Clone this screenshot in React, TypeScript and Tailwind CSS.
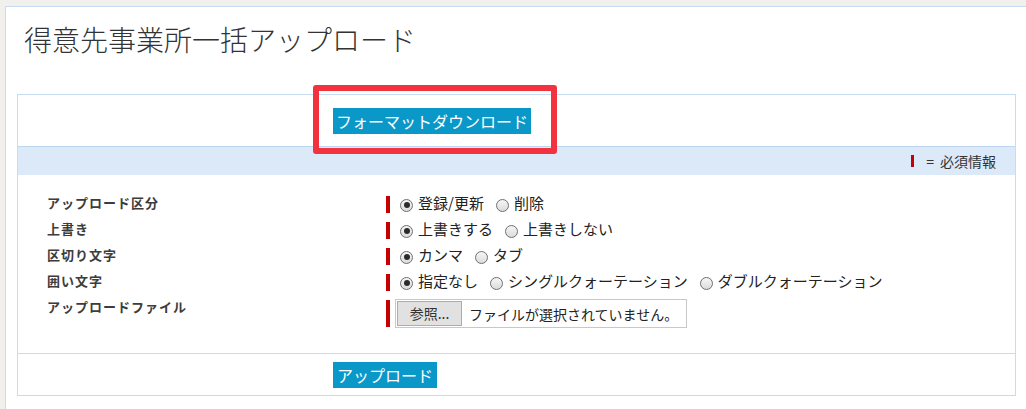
import React from 'react';

type Option = { label: string; checked?: boolean };

const rows: { label: string; options: Option[] }[] = [
  { label: 'アップロード区分', options: [{ label: '登録/更新', checked: true }, { label: '削除' }] },
  { label: '上書き', options: [{ label: '上書きする', checked: true }, { label: '上書きしない' }] },
  { label: '区切り文字', options: [{ label: 'カンマ', checked: true }, { label: 'タブ' }] },
  {
    label: '囲い文字',
    options: [
      { label: '指定なし', checked: true },
      { label: 'シングルクォーテーション' },
      { label: 'ダブルクォーテーション' },
    ],
  },
];

function Radio({ checked }: { checked?: boolean }) {
  return (
    <span className="mt-[4px] flex h-[13px] w-[13px] shrink-0 items-center justify-center rounded-full border border-[#6f6f6f] bg-gradient-to-b from-[#f6f6f6] to-[#dcdcdc]">
      {checked && <span className="h-[6px] w-[6px] rounded-full bg-[#2b2b2b]" />}
    </span>
  );
}

export default function App() {
  return (
    <div className="relative min-h-[409px] bg-[#f1f0ec] pl-[5px] pt-[6px] font-['Noto_Sans_CJK_JP',sans-serif] text-[#333]">
      <div className="min-h-[403px] border-l border-t border-[#c5dcf2] bg-white">
        {/* タイトル */}
        <div className="h-[87px] pl-[18px] pt-[14px]">
          <h1 className="text-[28px] font-light leading-[36px] text-[#333]">得意先事業所一括アップロード</h1>
        </div>

        <div className="ml-[11px] w-[999px] border border-[#c5dcf2]">
          {/* フォーマット */}
          <div className="h-[51px] pl-[315px] pt-[13px]">
            <button className="h-[26px] bg-[#0a98c9] px-[3px] text-[16px] leading-[26px] text-white">
              フォーマットダウンロード
            </button>
          </div>

          {/* 必須情報 */}
          <div className="flex h-[29px] items-center justify-end border-t border-[#bed7f0] bg-[#dbe9f8] pr-[19px]">
            <span className="mr-[12px] h-[12px] w-[3px] bg-[#c40000]" />
            <span className="mr-[6px] text-[14px] leading-[20px]">=</span>
            <span className="text-[14px] leading-[20px]">必須情報</span>
          </div>

          {/* フォーム */}
          <div className="pb-[23px] pt-[15px]">
            {rows.map((row) => (
              <div key={row.label} className="flex h-[26px]">
                <div className="w-[368px] pl-[29px] text-[13px] font-bold leading-[26px] tracking-[1px] text-[#3c3c3c]">
                  {row.label}
                </div>
                <div className="flex items-center">
                  <span className="mt-[3px] h-[17px] w-[4px] bg-[#c40000]" />
                  <div className="ml-[10px] flex items-center gap-[12px]">
                    {row.options.map((o) => (
                      <label key={o.label} className="flex items-center gap-[5px] text-[15px] leading-[22px] text-[#222]">
                        <Radio checked={o.checked} />
                        <span>{o.label}</span>
                      </label>
                    ))}
                  </div>
                </div>
              </div>
            ))}
            <div className="flex h-[36px]">
              <div className="w-[368px] pl-[29px] text-[13px] font-bold leading-[26px] tracking-[1px] text-[#3c3c3c]">
                アップロードファイル
              </div>
              <div className="flex items-start pt-[5px]">
                <span className="mt-[1px] h-[27px] w-[4px] bg-[#c40000]" />
                <div className="ml-[5px] flex h-[29px] w-[292px] items-center border border-[#c8c8c8] px-[1px]">
                  <span className="flex h-[25px] w-[65px] shrink-0 items-center justify-center border border-[#adadad] bg-[#e1e1e1] text-[14px]">
                    参照...
                  </span>
                  <span className="ml-[7px] whitespace-nowrap text-[14px] leading-[20px] text-[#222]">
                    ファイルが選択されていません。
                  </span>
                </div>
              </div>
            </div>
          </div>

          {/* アップロード */}
          <div className="h-[42px] border-t border-[#c5dcf2] pl-[315px] pt-[8px]">
            <button className="h-[26px] bg-[#0a98c9] px-[4px] text-[16px] leading-[26px] text-white">アップロード</button>
          </div>
        </div>
      </div>

      {/* 注釈の赤枠 */}
      <div className="absolute left-[313px] top-[85px] h-[69px] w-[244px] rounded-[3px] border-[6px] border-[#f2333f]" />
    </div>
  );
}
